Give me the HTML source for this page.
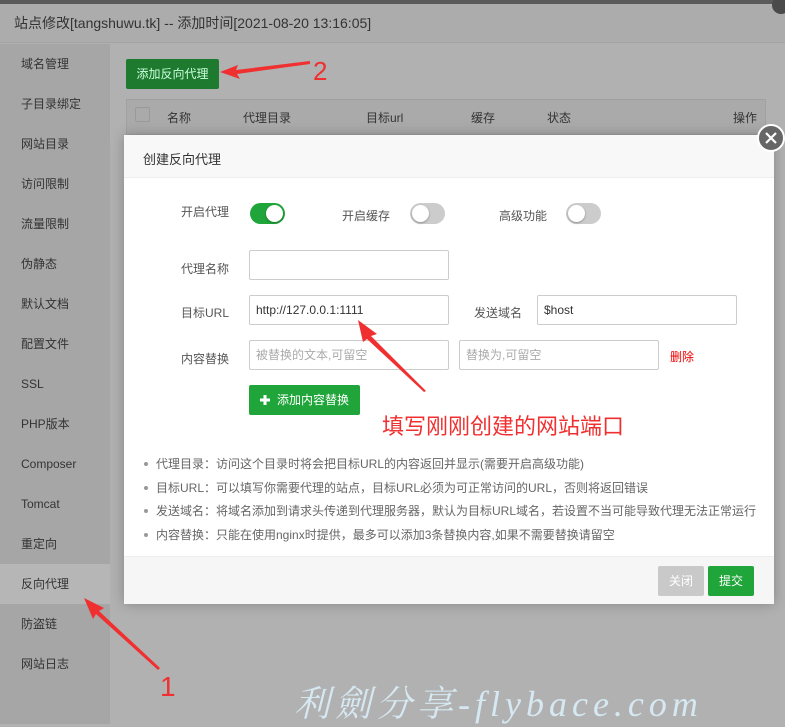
<!DOCTYPE html>
<html><head><meta charset="utf-8">
<style>
*{margin:0;padding:0;box-sizing:border-box}
body{width:785px;height:724px;overflow:hidden;position:relative;background:#b1b1b1;font-family:"Liberation Sans","Noto Sans CJK SC",sans-serif;font-size:12px;color:#333}
.a{position:absolute}
.side div{position:absolute;left:0;width:110px;height:40px;line-height:40px;padding-left:21px;color:#333;font-size:12px}
.inp{position:absolute;height:30px;border:1px solid #ccc;background:#fff;border-radius:2px;padding-left:6px;line-height:28px;font-size:12px;color:#333}
.ph{color:#aaa}
.lbl{position:absolute;font-size:12px;color:#555}
.sw{position:absolute;width:35px;height:21px;border-radius:11px;background:#ccc}
.sw i{position:absolute;top:2px;width:17px;height:17px;border-radius:50%;background:#fff;box-shadow:0 1px 2px rgba(0,0,0,.3)}
.tip{position:absolute;left:156px;font-size:12px;color:#666;white-space:nowrap}
.tip:before{content:"";position:absolute;left:-12px;top:7px;width:4px;height:4px;border-radius:50%;background:#999}
</style></head><body>
<div class="a" style="left:0;top:0;width:785px;height:4px;background:#5a5a5a"></div>
<div class="a" style="left:0;top:4px;width:785px;height:39px;background:#acacac;border-bottom:1px solid #a3a3a3"></div>
<div class="a" style="left:14px;top:13px;font-size:14px;color:#333">站点修改[tangshuwu.tk] -- 添加时间[2021-08-20 13:16:05]</div>
<div class="a" style="left:0;top:44px;width:110px;height:680px;background:#a6a6a6"></div>
<div class="a" style="left:0;top:564px;width:110px;height:40px;background:#b6b6b6"></div>
<div class="side">
<div style="top:44px">域名管理</div><div style="top:84px">子目录绑定</div><div style="top:124px">网站目录</div><div style="top:164px">访问限制</div><div style="top:204px">流量限制</div><div style="top:244px">伪静态</div><div style="top:284px">默认文档</div><div style="top:324px">配置文件</div><div style="top:364px">SSL</div><div style="top:404px">PHP版本</div><div style="top:444px">Composer</div><div style="top:484px">Tomcat</div><div style="top:524px">重定向</div><div style="top:564px">反向代理</div><div style="top:604px">防盗链</div><div style="top:644px">网站日志</div>
</div>
<div class="a" style="left:772px;top:-4px;width:18px;height:18px;border-radius:50%;background:#4a4a4a"></div>
<div class="a" style="left:126px;top:59px;width:93px;height:30px;background:#1d7a2e;border-radius:2px;color:#cfd;line-height:30px;text-align:center;font-size:12px">添加反向代理</div>
<div class="a" style="left:126px;top:99px;width:640px;height:36px;background:#aaa;border:1px solid #a0a0a0"></div>
<div class="a" style="left:135px;top:107px;width:15px;height:15px;border:1px solid #999;border-radius:2px"></div>
<div class="a" style="top:109px;left:167px;color:#333">名称</div>
<div class="a" style="top:109px;left:243px;color:#333">代理目录</div>
<div class="a" style="top:109px;left:366px;color:#333">目标url</div>
<div class="a" style="top:109px;left:471px;color:#333">缓存</div>
<div class="a" style="top:109px;left:547px;color:#333">状态</div>
<div class="a" style="top:109px;left:733px;color:#333">操作</div>
<svg class="a" style="left:218px;top:56px" width="100" height="24"><polygon points="2,16 20,9 18,14 92,5 92,8 19,18 22,23" fill="#f03030"/></svg>
<div class="a" style="left:313px;top:56px;font-size:26px;color:#f03030">2</div>
<div class="a" style="left:124px;top:135px;width:650px;height:469px;background:#fff;box-shadow:0 0 12px rgba(0,0,0,.25)"></div>
<div class="a" style="left:124px;top:135px;width:650px;height:43px;background:#f8f8f8;border-bottom:1px solid #eee"></div>
<div class="a" style="left:143px;top:149px;font-size:13px;color:#333">创建反向代理</div>
<div class="a" style="left:757px;top:124px;width:28px;height:28px;border-radius:50%;background:#666;border:2px solid #fff"></div>
<svg class="a" style="left:757px;top:124px" width="28" height="28"><path d="M9 9L19 19M19 9L9 19" stroke="#fff" stroke-width="2.2"/></svg>
<div class="lbl" style="left:181px;top:203px">开启代理</div>
<div class="sw" style="left:250px;top:203px;background:#20a53a"><i style="left:16px"></i></div>
<div class="lbl" style="left:342px;top:207px">开启缓存</div>
<div class="sw" style="left:410px;top:203px"><i style="left:2px"></i></div>
<div class="lbl" style="left:499px;top:207px">高级功能</div>
<div class="sw" style="left:566px;top:203px"><i style="left:2px"></i></div>
<div class="lbl" style="left:181px;top:260px">代理名称</div>
<div class="inp" style="left:249px;top:250px;width:200px"></div>
<div class="lbl" style="left:181px;top:304px">目标URL</div>
<div class="inp" style="left:249px;top:295px;width:200px">http://127.0.0.1:1111</div>
<div class="lbl" style="left:474px;top:304px">发送域名</div>
<div class="inp" style="left:537px;top:295px;width:200px">$host</div>
<div class="lbl" style="left:181px;top:350px">内容替换</div>
<div class="inp ph" style="left:249px;top:340px;width:200px">被替换的文本,可留空</div>
<div class="inp ph" style="left:459px;top:340px;width:200px">替换为,可留空</div>
<div class="a" style="left:670px;top:348px;color:#e00">删除</div>
<div class="a" style="left:249px;top:385px;width:111px;height:30px;background:#20a53a;border-radius:2px;color:#fff;line-height:30px;font-size:12px;padding-left:28px">添加内容替换</div>
<svg class="a" style="left:259px;top:394px" width="12" height="12"><path d="M6 1V11M1 6H11" stroke="#fff" stroke-width="3"/></svg>
<svg class="a" style="left:350px;top:318px" width="80" height="76"><polygon points="8,2 27,16 21,18 76,73 74,74 17,21 13,24" fill="#f03030"/></svg>
<div class="a" style="left:382px;top:409px;font-size:22px;color:#f03030">填写刚刚创建的网站端口</div>
<div class="tip" style="top:455px">代理目录：访问这个目录时将会把目标URL的内容返回并显示(需要开启高级功能)</div>
<div class="tip" style="top:479px">目标URL：可以填写你需要代理的站点，目标URL必须为可正常访问的URL，否则将返回错误</div>
<div class="tip" style="top:502px">发送域名：将域名添加到请求头传递到代理服务器，默认为目标URL域名，若设置不当可能导致代理无法正常运行</div>
<div class="tip" style="top:526px">内容替换：只能在使用nginx时提供，最多可以添加3条替换内容,如果不需要替换请留空</div>
<div class="a" style="left:124px;top:556px;width:650px;height:48px;background:#f5f6f5;border-top:1px solid #eee"></div>
<div class="a" style="left:658px;top:566px;width:46px;height:30px;background:#c9c9c9;border-radius:2px;color:#fff;line-height:30px;text-align:center">关闭</div>
<div class="a" style="left:708px;top:566px;width:46px;height:30px;background:#20a53a;border-radius:2px;color:#fff;line-height:30px;text-align:center">提交</div>
<svg class="a" style="left:80px;top:596px" width="90" height="80"><polygon points="4,2 24,12 19,15 80,72 78,74 16,18 13,23" fill="#f03030"/></svg>
<div class="a" style="left:160px;top:671px;font-size:28px;color:#f03030">1</div>
<div class="a" style="left:294px;top:676px;font-size:36px;color:#d6e8f2;font-family:'Liberation Serif','Noto Serif CJK SC',serif;font-style:italic;letter-spacing:5px;white-space:nowrap">利劍分享-flybace.com</div>
</body></html>
